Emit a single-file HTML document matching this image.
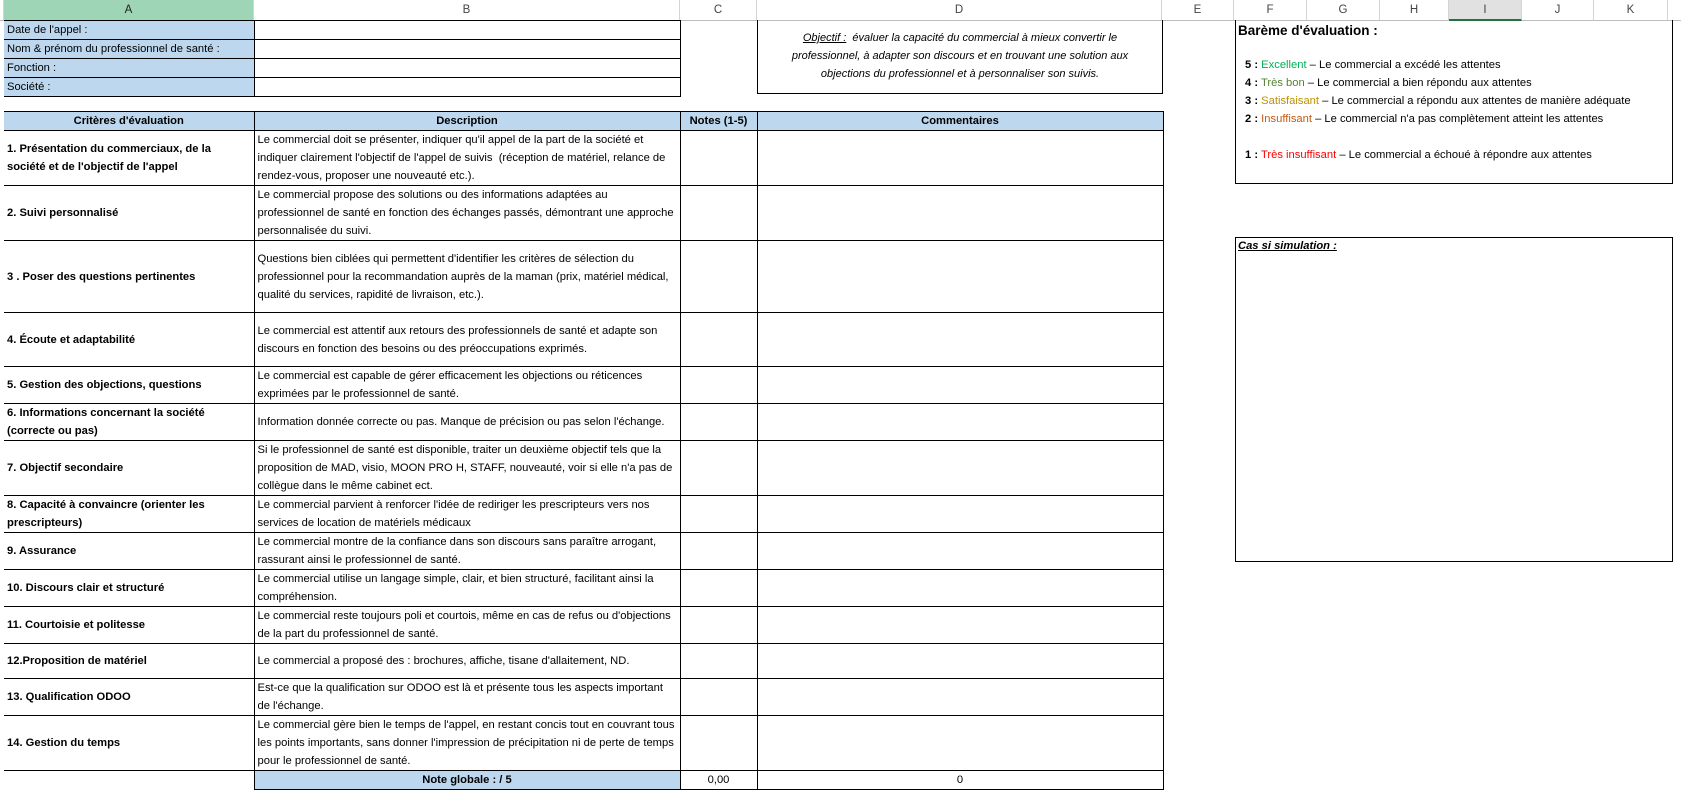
<!DOCTYPE html>
<html><head><meta charset="utf-8"><style>
*{margin:0;padding:0;box-sizing:border-box}
body{width:1681px;height:785px;background:#fff;font-family:"Liberation Sans",sans-serif;font-size:11.2px;color:#000;position:relative;overflow:hidden}
.hdr{position:absolute;top:0;height:21px;border-right:1px solid #d4d4d4;border-bottom:1px solid #bdbdbd;background:#fff;color:#444;font-size:11.5px;text-align:center;line-height:21px}
table{border-collapse:collapse;position:absolute;table-layout:fixed}
td{border:1px solid #000;padding:0 3px;line-height:18px;vertical-align:middle;overflow:hidden}
.blue{background:#bdd7ee}
.b{font-weight:bold}
.c{text-align:center}
.box{position:absolute;border:1px solid #000}
</style></head><body>
<div class="hdr" style="left:0;width:4px"></div>
<div class="hdr" style="left:4px;width:250px;background:#9fd5b7;color:#222">A</div>
<div class="hdr" style="left:254px;width:426px">B</div>
<div class="hdr" style="left:680px;width:77px">C</div>
<div class="hdr" style="left:757px;width:405px">D</div>
<div class="hdr" style="left:1162px;width:72px">E</div>
<div class="hdr" style="left:1234px;width:73px">F</div>
<div class="hdr" style="left:1307px;width:73px">G</div>
<div class="hdr" style="left:1380px;width:69px">H</div>
<div class="hdr" style="left:1449px;width:73px;background:#e1e1e1;border-bottom:2px solid #217346">I</div>
<div class="hdr" style="left:1522px;width:72px">J</div>
<div class="hdr" style="left:1594px;width:74px">K</div>
<div class="hdr" style="left:1668px;width:13px;border-right:none"></div>

<table style="left:4px;top:20px;width:676px">
<colgroup><col style="width:250px"><col style="width:426px"></colgroup>
<tr style="height:19px"><td class="blue" style="border-left:none">Date de l'appel :</td><td></td></tr>
<tr style="height:18px"><td class="blue" style="border-left:none">Nom &amp; prénom du professionnel de santé :</td><td></td></tr>
<tr style="height:18px"><td class="blue" style="border-left:none">Fonction :</td><td></td></tr>
<tr style="height:18px"><td class="blue" style="border-left:none">Société :</td><td></td></tr>
</table>

<div class="box" style="left:757px;top:20px;width:406px;height:74px;border-top:none;text-align:center;font-style:italic;line-height:18px;padding-top:9px;font-size:11px">
<u>Objectif :</u>&nbsp; évaluer la capacité du commercial à mieux convertir le<br>professionnel, à adapter son discours et en trouvant une solution aux<br>objections du professionnel et à personnaliser son suivis.</div>

<table style="left:4px;top:111px;width:1159px">
<colgroup><col style="width:250px"><col style="width:426px"><col style="width:77px"><col style="width:406px"></colgroup>
<tr style="height:19px" class="b c"><td class="blue" style="border-left:none">Critères d'évaluation</td><td class="blue">Description</td><td class="blue">Notes (1-5)</td><td class="blue">Commentaires</td></tr>
<tr style="height:54px"><td class="b" style="border-left:none">1. Présentation du commerciaux, de la société et de l'objectif de l'appel</td><td>Le commercial doit se présenter, indiquer qu'il appel de la part de la société et indiquer clairement l'objectif de l'appel de suivis&nbsp; (réception de matériel, relance de rendez-vous, proposer une nouveauté etc.).</td><td></td><td></td></tr>
<tr style="height:54px"><td class="b" style="border-left:none">2. Suivi personnalisé</td><td>Le commercial propose des solutions ou des informations adaptées au professionnel de santé en fonction des échanges passés, démontrant une approche personnalisée du suivi.</td><td></td><td></td></tr>
<tr style="height:72px"><td class="b" style="border-left:none">3 . Poser des questions pertinentes</td><td>Questions bien ciblées qui permettent d'identifier les critères de sélection du professionnel pour la recommandation auprès de la maman (prix, matériel médical, qualité du services, rapidité de livraison, etc.).</td><td></td><td></td></tr>
<tr style="height:54px"><td class="b" style="border-left:none">4. Écoute et adaptabilité</td><td>Le commercial est attentif aux retours des professionnels de santé et adapte son discours en fonction des besoins ou des préoccupations exprimés.</td><td></td><td></td></tr>
<tr style="height:36px"><td class="b" style="border-left:none">5. Gestion des objections, questions</td><td>Le commercial est capable de gérer efficacement les objections ou réticences exprimées par le professionnel de santé.</td><td></td><td></td></tr>
<tr style="height:35px"><td class="b" style="border-left:none">6. Informations concernant la société (correcte ou pas)</td><td>Information donnée correcte ou pas. Manque de précision ou pas selon l'échange.</td><td></td><td></td></tr>
<tr style="height:55px"><td class="b" style="border-left:none">7. Objectif secondaire</td><td>Si le professionnel de santé est disponible, traiter un deuxième objectif tels que la proposition de MAD, visio, MOON PRO H, STAFF, nouveauté, voir si elle n'a pas de collègue dans le même cabinet ect.</td><td></td><td></td></tr>
<tr style="height:35px"><td class="b" style="border-left:none">8. Capacité à convaincre (orienter les prescripteurs)</td><td>Le commercial parvient à renforcer l'idée de rediriger les prescripteurs vers nos services de location de matériels médicaux</td><td></td><td></td></tr>
<tr style="height:37px"><td class="b" style="border-left:none">9. Assurance</td><td>Le commercial montre de la confiance dans son discours sans paraître arrogant, rassurant ainsi le professionnel de santé.</td><td></td><td></td></tr>
<tr style="height:35px"><td class="b" style="border-left:none">10. Discours clair et structuré</td><td>Le commercial utilise un langage simple, clair, et bien structuré, facilitant ainsi la compréhension.</td><td></td><td></td></tr>
<tr style="height:37px"><td class="b" style="border-left:none">11. Courtoisie et politesse</td><td>Le commercial reste toujours poli et courtois, même en cas de refus ou d'objections de la part du professionnel de santé.</td><td></td><td></td></tr>
<tr style="height:35px"><td class="b" style="border-left:none">12.Proposition de matériel</td><td>Le commercial a proposé des : brochures, affiche, tisane d'allaitement, ND.</td><td></td><td></td></tr>
<tr style="height:36px"><td class="b" style="border-left:none">13. Qualification ODOO</td><td>Est-ce que la qualification sur ODOO est là et présente tous les aspects important de l'échange.</td><td></td><td></td></tr>
<tr style="height:55px"><td class="b" style="border-left:none">14. Gestion du temps</td><td>Le commercial gère bien le temps de l'appel, en restant concis tout en couvrant tous les points importants, sans donner l'impression de précipitation ni de perte de temps pour le professionnel de santé.</td><td></td><td></td></tr>
<tr style="height:18px"><td style="border:none;border-top:1px solid #000"></td><td class="blue b c">Note globale : / 5</td><td class="c">0,00</td><td class="c">0</td></tr>
</table>

<div class="box" style="left:1235px;top:20px;width:438px;height:164px;border-top:none;padding-left:2px">
<div class="b" style="font-size:13.5px;margin-top:3px">Barème d'évaluation :</div>
<div style="line-height:18px;margin-top:18px;padding-left:7px">
<b>5 :</b> <span style="color:#00b050">Excellent</span> – Le commercial a excédé les attentes<br>
<b>4 :</b> <span style="color:#548235">Très bon</span> – Le commercial a bien répondu aux attentes<br>
<b>3 :</b> <span style="color:#bf9000">Satisfaisant</span> – Le commercial a répondu aux attentes de manière adéquate<br>
<b>2 :</b> <span style="color:#c55a11">Insuffisant</span> – Le commercial n'a pas complètement atteint les attentes<br><br>
<b>1 :</b> <span style="color:#ff0000">Très insuffisant</span> – Le commercial a échoué à répondre aux attentes</div>
</div>

<div class="box" style="left:1235px;top:237px;width:438px;height:325px;padding-left:2px">
<div class="b" style="font-style:italic;text-decoration:underline;margin-top:2px">Cas si simulation :</div>
</div>
</body></html>
